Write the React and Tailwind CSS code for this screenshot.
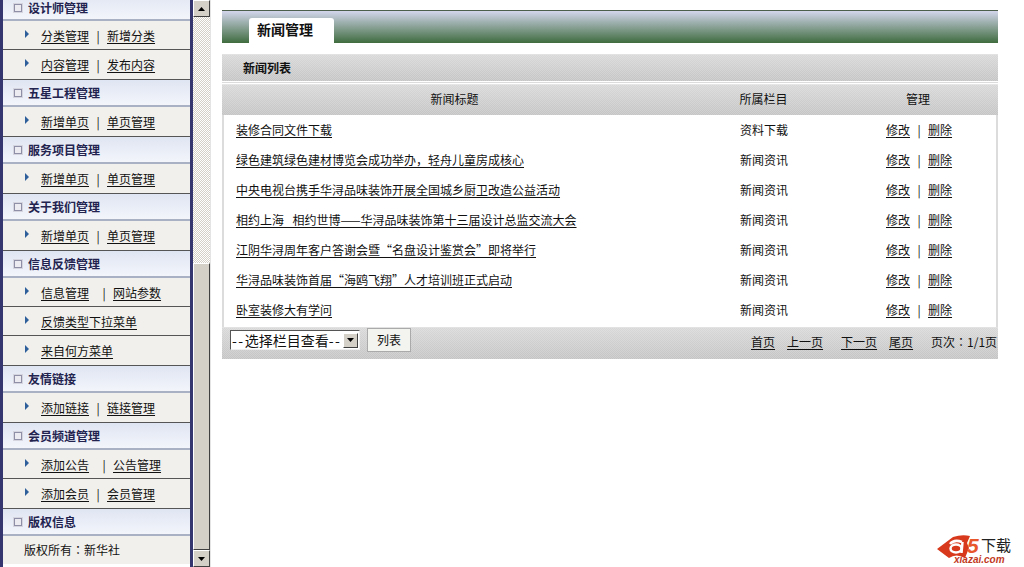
import React from "react";

const menu = [
  { title: "设计师管理", first: true, rows: [
    { links: ["分类管理", "新增分类"] },
    { links: ["内容管理", "发布内容"] },
  ] },
  { title: "五星工程管理", rows: [{ links: ["新增单页", "单页管理"] }] },
  { title: "服务项目管理", rows: [{ links: ["新增单页", "单页管理"] }] },
  { title: "关于我们管理", rows: [{ links: ["新增单页", "单页管理"] }] },
  { title: "信息反馈管理", rows: [
    { links: ["信息管理", "网站参数"], wide: true },
    { links: ["反馈类型下拉菜单"] },
    { links: ["来自何方菜单"] },
  ] },
  { title: "友情链接", rows: [{ links: ["添加链接", "链接管理"] }] },
  { title: "会员频道管理", rows: [
    { links: ["添加公告", "公告管理"], wide: true },
    { links: ["添加会员", "会员管理"] },
  ] },
];

const news = [
  { title: "装修合同文件下载", cat: "资料下载" },
  { title: "绿色建筑绿色建材博览会成功举办，轻舟儿童房成核心", cat: "新闻资讯" },
  { title: "中央电视台携手华浔品味装饰开展全国城乡厨卫改造公益活动", cat: "新闻资讯" },
  { title: "相约上海\u2002\u2009相约世博——华浔品味装饰第十三届设计总监交流大会", cat: "新闻资讯" },
  { title: "江阴华浔周年客户答谢会暨“名盘设计鉴赏会”即将举行", cat: "新闻资讯" },
  { title: "华浔品味装饰首届“海鸥飞翔”人才培训班正式启动", cat: "新闻资讯" },
  { title: "卧室装修大有学问", cat: "新闻资讯" },
];

// grey bars in the original are a dithered gif, so a faint checker goes over the gradient
const greyBar =
  "bg-[repeating-conic-gradient(#ffffff30_0_25%,transparent_0_50%),linear-gradient(#d8d8d8,#c4c4c4)] bg-[length:2px_2px,auto]";

function MenuHeader({ title, first }) {
  return (
    <div className={`flex items-center gap-[6px] h-[28px] pl-[11px] border-b-2 border-[#a9b1c4] bg-[linear-gradient(#dfe5f2,#f3f5fb)] ${first ? "-mt-[7px] pt-[3px]" : "border-t border-t-[#555]"}`}>
      <span className="w-[8px] h-[8px] border border-[#8f8fa8] bg-[#ecebf2] outline outline-1 outline-[#d5d5e0]" />
      <span className="text-[12px] font-bold text-[#23234f]">{title}</span>
    </div>
  );
}

function MenuRow({ links, wide }) {
  return (
    <div className="flex items-center h-[29px] pl-[22px] pt-[1px] border-b border-[#555] bg-[#f1f0ec] last:border-b-0 text-[12px] text-[#111]">
      <svg width="4" height="8" viewBox="0 0 4 8" className="-mt-[4px] mr-[12px]">
        <path d="M0 0 L4 4 L0 8 Z" fill="#2f5f9a" />
      </svg>
      <span className="underline underline-offset-2">{links[0]}</span>
      {links[1] && (
        <>
          <span className={`text-center ${wide ? "w-[24px] pl-[6px]" : "w-[18px]"}`}>|</span>
          <span className="underline underline-offset-2">{links[1]}</span>
        </>
      )}
    </div>
  );
}

function ScrollButton({ up }) {
  return (
    <div className="flex items-center justify-center w-[17px] h-[17px] shrink-0 bg-[#d4d0c8] border border-t-white border-l-white border-r-[#404040] border-b-[#404040]">
      <svg width="7" height="4" viewBox="0 0 7 4">
        <path d={up ? "M0 4 L3.5 0 L7 4 Z" : "M0 0 L7 0 L3.5 4 Z"} fill="#000" />
      </svg>
    </div>
  );
}

function Sidebar() {
  return (
    <aside className="flex w-[211px] h-[567px] shrink-0 border-r border-[#e4e4e4] overflow-hidden">
      <div className="w-[193px] border-x-[3px] border-[#35356f] overflow-hidden">
        {menu.map((group) => (
          <div key={group.title}>
            <MenuHeader title={group.title} first={group.first} />
            {group.rows.map((row) => (
              <MenuRow key={row.links[0]} links={row.links} wide={row.wide} />
            ))}
          </div>
        ))}
        <MenuHeader title="版权信息" />
        <div className="flex items-center h-[28px] pl-[21px] bg-[#f1f0ec] text-[12px] text-[#111]">
          版权所有<span className="font-['Noto_Sans_CJK_TC']">：</span>新华社
        </div>
      </div>
      <div className="flex flex-col w-[17px]">
        <ScrollButton up />
        <div className="h-[246px] bg-[repeating-conic-gradient(#d4d0c8_0_25%,#ffffff_0_50%)] bg-[length:2px_2px]" />
        <div className="flex-1 bg-[#d4d0c8] border border-t-white border-l-white border-r-[#404040] border-b-[#404040]" />
        <ScrollButton />
      </div>
    </aside>
  );
}

function Logo() {
  return (
    <div className="absolute right-[12px] bottom-[3px] w-[76px] h-[30px]">
      <svg width="76" height="30" viewBox="0 0 76 30" className="absolute inset-0">
        <path d="M1 15 L17 3 Q26 0 34 2 L31 9 L33 14 L29 24 Q20 19 13 24 Z" fill="#d8391c" />
        <path d="M26 8 Q18 5 14 10" fill="none" stroke="#fff" strokeWidth="2.5" />
        <ellipse cx="20" cy="14.5" rx="5.5" ry="4" fill="none" stroke="#fff" strokeWidth="2.5" />
        <path d="M26.5 8 L25.5 19" fill="none" stroke="#fff" strokeWidth="2.5" />
        <text x="31" y="19" fontSize="21" fontWeight="bold" fontStyle="italic" fill="#e8562c" fontFamily="'Liberation Sans', sans-serif">5</text>
        <text x="45" y="17" fontSize="15" fill="#222" fontFamily="'Noto Sans CJK SC', sans-serif">下载</text>
        <text x="18" y="28.5" fontSize="10" fontStyle="italic" fontWeight="bold" fill="#c23a1e" fontFamily="'Liberation Sans', sans-serif">xiazai.com</text>
      </svg>
    </div>
  );
}

export default function App() {
  return (
    <div className="relative flex w-[1024px] h-[567px] overflow-hidden bg-white font-['Noto_Sans_CJK_SC','Liberation_Sans',sans-serif]">
      <Sidebar />

      <main className="w-[776px] ml-[11px] pt-[10px] text-[12px] text-[#111]">
        <div className="flex items-end h-[33px] pl-[27px] border-t border-[#4c5f4c] bg-[linear-gradient(#d3d6ec,#3f6c3f)]">
          <div className="flex items-center w-[85px] h-[25px] pb-[2px] pl-[8px] rounded-t-[3px] bg-white text-[14px] font-bold text-[#111]">新闻管理</div>
        </div>

        <div className={`flex items-center h-[27px] mt-[11px] pl-[21px] border-t border-[#e2e2e2] font-bold ${greyBar}`}>新闻列表</div>
        <div className="h-px mt-[1px] bg-[#dcdcdc]" />

        <div className={`flex items-center h-[31px] mt-[1px] pb-[2px] border-t border-[#e6e6e6] ${greyBar}`}>
          <span className="w-[465px] text-center">新闻标题</span>
          <span className="w-[153px] text-center">所属栏目</span>
          <span className="w-[156px] text-center">管理</span>
        </div>

        <div className="h-[212px] border-x-2 border-[#dcdcdc]">
          {news.map((item) => (
            <div key={item.title} className="flex items-center h-[30px]">
              <span className="w-[516px] pl-[12px]"><span className="underline underline-offset-2">{item.title}</span></span>
              <span className="w-[146px]">{item.cat}</span>
              <span className="underline underline-offset-2">修改</span>
              <span className="w-[18px] text-center">|</span>
              <span className="underline underline-offset-2">删除</span>
            </div>
          ))}
        </div>

        <div className={`flex items-start h-[32px] pl-[8px] border-t border-[#e2e2e2] ${greyBar}`}>
          <div className="flex items-center justify-between w-[130px] h-[20px] mt-[2px] pl-[1px] pr-[1px] bg-white border border-t-[#555] border-l-[#555] border-r-[#eee] border-b-[#eee] text-[14px] leading-none whitespace-nowrap">
            <span><span className="tracking-[1.5px]">--</span>选择栏目查看<span className="tracking-[1.5px]">--</span></span>
            <span className="flex items-center justify-center w-[15px] h-[15px] shrink-0 bg-[#d4d0c8] border border-t-white border-l-white border-r-[#404040] border-b-[#404040]">
              <svg width="7" height="4" viewBox="0 0 7 4"><path d="M0 0 L7 0 L3.5 4 Z" fill="#000" /></svg>
            </span>
          </div>
          <div className="flex items-center justify-center w-[44px] h-[24px] ml-[7px] bg-[#f3f3ef] border border-[#aaa]">列表</div>
          <div className="flex items-center h-[24px] mt-[2px] ml-[340px] whitespace-nowrap">
            <span className="underline underline-offset-2">首页</span>
            <span className="ml-[12px] underline underline-offset-2">上一页</span>
            <span className="ml-[18px] underline underline-offset-2">下一页</span>
            <span className="ml-[12px] underline underline-offset-2">尾页</span>
            <span className="ml-[18px]">页次<span className="font-['Noto_Sans_CJK_TC']">：</span>1/1页</span>
          </div>
        </div>
      </main>

      <Logo />
    </div>
  );
}
